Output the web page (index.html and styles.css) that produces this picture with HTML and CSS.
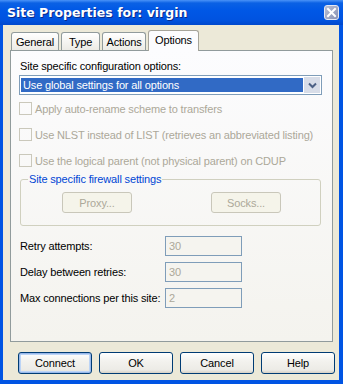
FILE: index.html
```html
<!DOCTYPE html>
<html lang="en">
  <head>
    <meta charset="utf-8">
    <title>Site Properties for: virgin</title>
    <link rel="stylesheet" href="styles.css">
  </head>
  <body>
    <div class="Window">
      <div class="Title-Bar">
        <span class="Title">Site Properties for: virgin</span>
        <span class="Close-Btn">
          <svg width="11" height="11" viewBox="0 0 11 11">
            <path d="M2 2 L9 9 M9 2 L2 9" stroke="#fff" stroke-width="2" stroke-linecap="square"/>
          </svg>
        </span>
      </div>
      <div class="Client">
        <div class="Tabs">
          <div class="Tab Tab-General">General</div>
          <div class="Tab Tab-Type">Type</div>
          <div class="Tab Tab-Actions">Actions</div>
          <div class="Tab Tab-Options Selected">Options</div>
        </div>
        <div class="Panel">
          <div class="Label">Site specific configuration options:</div>
          <div class="Select">
            <div class="Select-Value">Use global settings for all options</div>
            <div class="Select-Btn">
              <svg width="9" height="7" viewBox="0 0 9 7">
                <path d="M1 1.5 L4.5 5 L8 1.5" fill="none" stroke="#4d6185" stroke-width="2"/>
              </svg>
            </div>
          </div>
          <div class="Check First"><span class="Box"></span>Apply auto-rename scheme to transfers</div>
          <div class="Check"><span class="Box"></span>Use NLST instead of LIST (retrieves an abbreviated listing)</div>
          <div class="Check"><span class="Box"></span>Use the logical parent (not physical parent) on CDUP</div>
          <fieldset class="Group">
            <legend>Site specific firewall settings</legend>
            <div class="Group-Btns">
              <span class="Btn Disabled">Proxy...</span>
              <span class="Btn Disabled">Socks...</span>
            </div>
          </fieldset>
          <div class="Field"><span class="Field-Label">Retry attempts:</span><span class="Input">30</span></div>
          <div class="Field"><span class="Field-Label">Delay between retries:</span><span class="Input">30</span></div>
          <div class="Field"><span class="Field-Label">Max connections per this site:</span><span class="Input">2</span></div>
        </div>
        <div class="Dialog-Btns">
          <span class="Btn Default">Connect</span>
          <span class="Btn">OK</span>
          <span class="Btn">Cancel</span>
          <span class="Btn">Help</span>
        </div>
      </div>
    </div>
  </body>
</html>
```

FILE: styles.css
```css
body {
  margin: 0;
  padding: 0;
  font-family: 'Liberation Sans', Arial, sans-serif;
  font-size: 11px;
  letter-spacing: -0.15px;
  color: #000;
}

.Window {
  display: flex;
  flex-direction: column;
  width: 343px;
  height: 384px;
  background: #0054e3;
}

.Title-Bar {
  display: flex;
  align-items: center;
  justify-content: space-between;
  height: 25px;
  padding: 0 4px 0 7px;
  background: linear-gradient(#4a93f8 0, #0b61e4 3px, #0058e6 10px, #0053e0 20px, #0048cc 25px);
}

.Title {
  color: white;
  font-family: 'DejaVu Sans', sans-serif;
  font-weight: bold;
  font-size: 12.5px;
  letter-spacing: 0;
  text-shadow: 1px 1px #0a2a8a;
}

.Close-Btn {
  display: flex;
  align-items: center;
  justify-content: center;
  width: 15px;
  height: 15px;
  border: 1px solid #e4e8f4;
  border-radius: 3px;
  background: linear-gradient(135deg, #b7bed4 0%, #8892b4 100%);
  box-sizing: border-box;
}

.Client {
  display: flex;
  flex-direction: column;
  flex: 1;
  margin: 0 4px 4px 3px;
  background: #ece9d8;
}

.Tabs {
  display: flex;
  align-items: flex-end;
  gap: 2px;
  height: 20px;
  margin-top: 5px;
  padding-left: 8px;
}

.Tab {
  display: flex;
  align-items: center;
  justify-content: center;
  height: 18px;
  padding-top: 1px;
  border: 1px solid #919b9c;
  border-bottom: none;
  border-radius: 3px 3px 0 0;
  background: linear-gradient(#ffffff, #ecebe5);
  box-sizing: border-box;
}

.Tab-General { width: 48px; }
.Tab-Type { width: 39px; }
.Tab-Actions { width: 44px; }
.Tab-Options { width: 51px; }

.Tab.Selected {
  position: relative;
  z-index: 1;
  height: 21px;
  margin-bottom: -1px;
  padding-top: 0;
  padding-bottom: 3px;
  background: #fcfcfe;
  border-color: #a6a49a;
}

.Panel {
  display: flex;
  flex-direction: column;
  height: 292px;
  margin: 0 6px 0 7px;
  padding: 8px 10px 0 8px;
  border: 1px solid #919b9c;
  background: linear-gradient(#fcfcfe, #f4f3ee);
  box-sizing: border-box;
}

.Label {
  line-height: 14px;
  padding-left: 1px;
}

.Select {
  display: flex;
  align-items: stretch;
  height: 20px;
  margin-top: 2px;
  padding: 1px;
  border: 1px solid #7f9db9;
  background: white;
  box-sizing: border-box;
}

.Select-Value {
  flex: 1;
  margin: 1px 1px 1px 0;
  padding-left: 2px;
  line-height: 14px;
  color: white;
  background: #316ac5;
}

.Select-Btn {
  display: flex;
  align-items: center;
  justify-content: center;
  width: 16px;
  background: #d8dde8;
  background-image: radial-gradient(#b9c3d6 35%, transparent 40%);
  background-size: 2px 2px;
}

.Check {
  display: flex;
  align-items: center;
  gap: 3px;
  height: 13px;
  margin-top: 13px;
  color: #aca899;
}

.Check.First {
  margin-top: 7px;
}

.Box {
  width: 13px;
  height: 13px;
  border: 1px solid #cac8bb;
  box-sizing: border-box;
}

.Group {
  margin: 6px 1px 0 1px;
  padding: 0;
  border: 1px solid #d0d0bf;
  border-radius: 3px;
  min-width: 0;
}

.Group legend {
  margin-left: 7px;
  padding: 0 1px;
  line-height: 13px;
  color: #0046d5;
}

.Group-Btns {
  display: flex;
  justify-content: space-between;
  padding: 6px 39px 12px 41px;
}

.Btn {
  display: flex;
  align-items: center;
  justify-content: center;
  width: 74px;
  height: 22px;
  border: 1px solid #003c74;
  border-radius: 3px;
  background: linear-gradient(#ffffff 0%, #f3f2ee 40%, #ecebe6 85%, #d6d0c5 100%);
  box-sizing: border-box;
}

.Btn.Disabled {
  width: 70px;
  height: 21px;
  border-color: #c9c7ba;
  color: #aca899;
  background: #f5f4ea;
}

.Btn.Default {
  box-shadow: inset 0 0 0 1px #98b8ea, inset 0 0 0 2px #bcd4f6;
}

.Field {
  display: flex;
  align-items: center;
  height: 20px;
  margin-top: 6px;
  padding-left: 1px;
}

.Group + .Field {
  margin-top: 10px;
}

.Field-Label {
  width: 145px;
}

.Input {
  display: flex;
  align-items: center;
  width: 77px;
  height: 20px;
  padding-left: 3px;
  border: 1px solid #7f9db9;
  color: #aca899;
  background: #f5f4ef;
  box-sizing: border-box;
}

.Dialog-Btns {
  display: flex;
  gap: 7px;
  margin-top: 10px;
  padding-left: 15px;
}
```
